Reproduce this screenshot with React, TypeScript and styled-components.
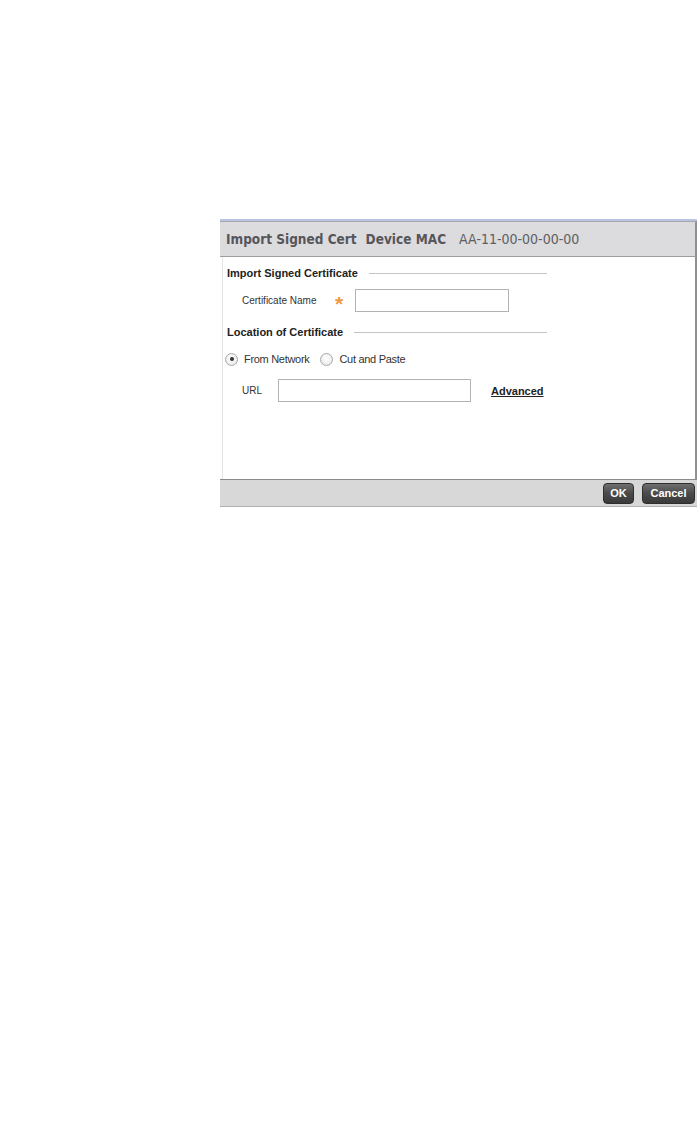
import React, { useState } from 'react';
import styled, { createGlobalStyle } from 'styled-components';

const GlobalStyle = createGlobalStyle`
  html, body {
    margin: 0;
    padding: 0;
    background: #ffffff;
  }
  body {
    font-family: 'Liberation Sans', Arial, sans-serif;
  }
`;

const App: React.FC = () => {
  const [source, setSource] = useState<'network' | 'paste'>('network');

  return (
    <>
      <GlobalStyle />
      <Page>
        <Dialog>
          <TopStrip />
          {/* 헤더 */}
          <Header>
            <HeaderTitle after={9}>Import Signed Cert</HeaderTitle>
            <HeaderTitle after={13}>Device MAC</HeaderTitle>
            <HeaderValue>AA-11-00-00-00-00</HeaderValue>
          </Header>

          {/* 본문 */}
          <Body>
            <SectionHeader>
              <SectionTitle>Import Signed Certificate</SectionTitle>
              <Rule />
            </SectionHeader>

            <FieldRow>
              <FieldLabel width={93}>Certificate Name</FieldLabel>
              <Required>*</Required>
              <TextInput width={154} />
            </FieldRow>

            <SectionHeader gap={13}>
              <SectionTitle>Location of Certificate</SectionTitle>
              <Rule />
            </SectionHeader>

            <RadioRow>
              <RadioOption onClick={() => setSource('network')}>
                <RadioCircle checked={source === 'network'} />
                <RadioLabel>From Network</RadioLabel>
              </RadioOption>
              <RadioOption onClick={() => setSource('paste')}>
                <RadioCircle checked={source === 'paste'} />
                <RadioLabel>Cut and Paste</RadioLabel>
              </RadioOption>
            </RadioRow>

            <FieldRow gap={13}>
              <FieldLabel width={36}>URL</FieldLabel>
              <TextInput width={193} />
              <AdvancedLink>Advanced</AdvancedLink>
            </FieldRow>
          </Body>

          {/* 하단 버튼 */}
          <Footer>
            <DarkButton width={31}>OK</DarkButton>
            <DarkButton width={53}>Cancel</DarkButton>
          </Footer>
        </Dialog>
      </Page>
    </>
  );
};

const Page = styled.div`
  width: 699px;
  min-height: 1143px;
  padding: 219px 0 0 220px;
  box-sizing: border-box;
`;

const Dialog = styled.div`
  width: 477px;
  display: flex;
  flex-direction: column;
`;

const TopStrip = styled.div`
  height: 2px;
  background: #b9c3e2;
`;

const Header = styled.div`
  height: 34px;
  display: flex;
  align-items: center;
  padding-left: 6px;
  background: #dcdbde;
  border-top: 1px solid #a7a7ad;
  border-right: 2px solid #8f8f94;
  border-bottom: 1px solid #9d9d9f;
`;

const HeaderTitle = styled.span<{ after: number }>`
  font-family: 'DejaVu Sans Condensed', 'DejaVu Sans', sans-serif;
  font-weight: 700;
  font-size: 13.5px;
  margin-right: ${({ after }) => after}px;
  color: #56565a;
`;

const HeaderValue = styled.span`
  font-family: 'DejaVu Sans Condensed', 'DejaVu Sans', sans-serif;
  font-size: 14px;
  color: #5e5e62;
`;

const Body = styled.div`
  height: 222px;
  box-sizing: border-box;
  padding: 9px 0 0 4px;
  margin-left: 2px;
  background: #ffffff;
  border-left: 1px solid #e4e4e4;
  border-right: 2px solid #8f8f94;
  display: flex;
  flex-direction: column;
`;

const SectionHeader = styled.div<{ gap?: number }>`
  width: 320px;
  height: 14px;
  margin-top: ${({ gap }) => gap ?? 0}px;
  display: flex;
  align-items: center;
`;

const SectionTitle = styled.span`
  font-weight: 700;
  font-size: 11px;
  color: #222222;
  white-space: nowrap;
`;

const Rule = styled.div`
  flex: 1;
  height: 1px;
  margin-left: 11px;
  background: #c4c4c4;
`;

const FieldRow = styled.div<{ gap?: number }>`
  display: flex;
  align-items: center;
  height: 23px;
  margin-top: ${({ gap }) => gap ?? 9}px;
  padding-left: 15px;
`;

const FieldLabel = styled.span<{ width: number }>`
  width: ${({ width }) => width}px;
  flex: none;
  font-size: 10px;
  color: #333333;
`;

const Required = styled.span`
  width: 20px;
  flex: none;
  color: #f29a3a;
  font-size: 21px;
  font-weight: 700;
  line-height: 1;
  padding-top: 5px;
`;

const TextInput = styled.div<{ width: number }>`
  width: ${({ width }) => width}px;
  height: 23px;
  flex: none;
  box-sizing: border-box;
  border: 1px solid #b3b3b3;
  background: #ffffff;
`;

const AdvancedLink = styled.span`
  margin-left: 20px;
  font-size: 11px;
  font-weight: 700;
  color: #222222;
  text-decoration: underline;
  cursor: pointer;
`;

const RadioRow = styled.div`
  display: flex;
  align-items: center;
  gap: 11px;
  height: 14px;
  margin-top: 13px;
  margin-left: -2px;
`;

const RadioOption = styled.label`
  display: flex;
  align-items: center;
  gap: 6px;
  cursor: pointer;
`;

const RadioCircle = styled.span<{ checked: boolean }>`
  width: 13px;
  height: 13px;
  box-sizing: border-box;
  border-radius: 50%;
  border: 1px solid #a9a9a9;
  background: radial-gradient(circle at 50% 40%, #ffffff 0%, #ececec 70%, #dcdcdc 100%);
  display: flex;
  align-items: center;
  justify-content: center;

  &::after {
    content: '';
    width: 4px;
    height: 4px;
    border-radius: 50%;
    background: #333333;
    display: ${({ checked }) => (checked ? 'block' : 'none')};
  }
`;

const RadioLabel = styled.span`
  font-size: 11px;
  color: #333333;
  letter-spacing: -0.3px;
`;

const Footer = styled.div`
  height: 26px;
  display: flex;
  align-items: center;
  justify-content: flex-end;
  gap: 8px;
  padding-right: 2px;
  background: #d8d8d8;
  border-top: 1px solid #8a8a8a;
  border-bottom: 1px solid #b1b1b1;
`;

const DarkButton = styled.button<{ width: number }>`
  width: ${({ width }) => width}px;
  height: 21px;
  padding: 0;
  border: 1px solid #2e2e2e;
  border-radius: 4px;
  background: linear-gradient(to bottom, #6f6f6f 0%, #4a4a4a 50%, #3a3a3a 100%);
  color: #ffffff;
  font-family: 'Liberation Sans', Arial, sans-serif;
  font-weight: 700;
  font-size: 11px;
  cursor: pointer;
`;

export default App;
